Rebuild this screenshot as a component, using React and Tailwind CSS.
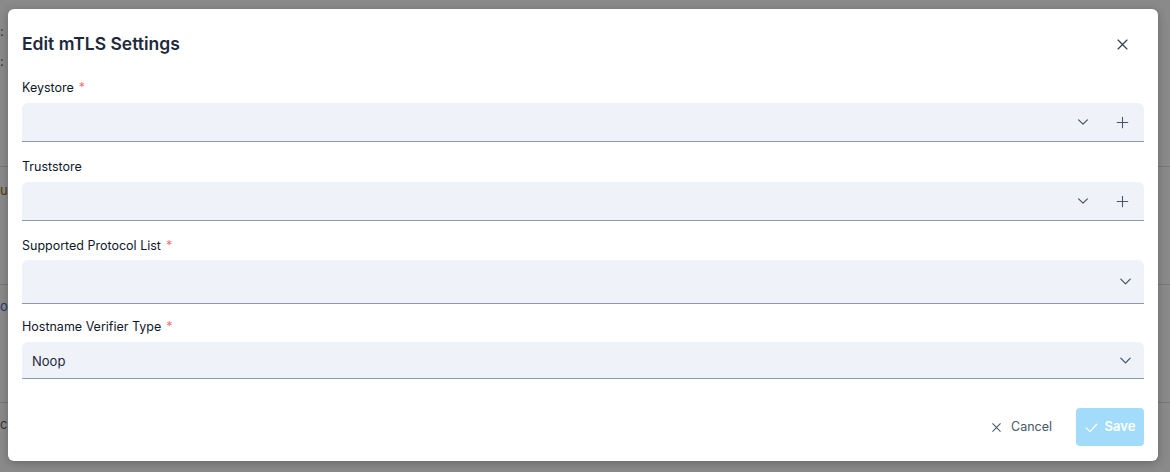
import React from "react";

const Chevron = ({ className = "" }) => (
  <svg viewBox="0 0 16 16" className={className} fill="none" stroke="currentColor" strokeWidth="1.4" strokeLinecap="round" strokeLinejoin="round">
    <path d="M3 5.5l5 5 5-5" />
  </svg>
);

const Plus = ({ className = "" }) => (
  <svg viewBox="0 0 16 16" className={className} fill="none" stroke="currentColor" strokeWidth="1.3" strokeLinecap="round">
    <path d="M8 1.5v13M1.5 8h13" />
  </svg>
);

const XIcon = ({ className = "" }) => (
  <svg viewBox="0 0 16 16" className={className} fill="none" stroke="currentColor" strokeWidth="1.5" strokeLinecap="round">
    <path d="M2.5 2.5l11 11M13.5 2.5l-11 11" />
  </svg>
);

const Check = ({ className = "" }) => (
  <svg viewBox="0 0 16 16" className={className} fill="none" stroke="currentColor" strokeWidth="1.5" strokeLinecap="round" strokeLinejoin="round">
    <path d="M1.5 8.5l4.5 4.5 8.5-9" />
  </svg>
);

function Label({ children, required }) {
  return (
    <div className="text-[12.5px] leading-5 font-normal text-[#0f172a] pt-[2px]">
      {children}
      {required && <span className="ml-[5px] text-[#f87171]">*</span>}
    </div>
  );
}

function Field({ h, plus, value, chevronRight }) {
  return (
    <div
      className={`flex items-center rounded-t-[6px] bg-[#eff2f8] border-b border-[#8a99b4] ${h}`}
    >
      <div className="flex-1 pl-[10px] pt-[3px] text-[13px] text-[#1e293b]">{value}</div>
      {plus ? (
        <div className="flex items-center">
          <Chevron className="w-[14px] h-[14px] text-[#475569] mr-[26px]" />
          <Plus className="w-[13px] h-[13px] text-[#475569] mr-[15px]" />
        </div>
      ) : (
        <Chevron className={`w-[15px] h-[15px] text-[#475569] ${chevronRight}`} />
      )}
    </div>
  );
}

export default function App() {
  return (
    <div
      className="relative w-[1170px] h-[472px] overflow-hidden bg-[#8a8a8a]"
      style={{ fontFamily: "Inter, 'Noto Sans', sans-serif" }}
    >
      {/* underlying page hints */}
      <div className="absolute left-0 top-[22px] text-[13px] text-[#333]">:</div>
      <div className="absolute left-0 top-[52px] text-[13px] text-[#333]">:</div>
      <div className="absolute left-0 right-0 top-[166px] h-px bg-[#777]" />
      <div className="absolute left-0 top-[181px] text-[13px] text-[#4a3a10]">u</div>
      <div className="absolute left-0 right-0 top-[284px] h-px bg-[#777]" />
      <div className="absolute left-0 top-[297px] text-[13px] text-[#1e3a6a]">o</div>
      <div className="absolute left-0 right-0 top-[402px] h-px bg-[#777]" />
      <div className="absolute left-0 top-[415px] text-[13px] text-[#333]">c</div>

      {/* modal */}
      <div className="absolute left-[8px] top-[9px] w-[1150px] h-[452px] bg-white rounded-[6px] shadow-[0_2px_10px_rgba(0,0,0,0.25)] px-[14px] flex flex-col">
        <div className="flex items-center justify-between pt-[21px] h-[49px]">
          <div className="text-[17.5px] leading-7 font-semibold text-[#1e293b]">Edit mTLS Settings</div>
          <XIcon className="w-[13px] h-[13px] text-[#334155] mr-[15px]" />
        </div>

        <div className="mt-[18px]">
          <Label required>Keystore</Label>
          <div className="mt-[5px]">
            <Field h="h-[39px]" plus />
          </div>
        </div>

        <div className="mt-[13px]">
          <Label>Truststore</Label>
          <div className="mt-[5px]">
            <Field h="h-[39px]" plus />
          </div>
        </div>

        <div className="mt-[13px]">
          <Label required>Supported Protocol List</Label>
          <div className="mt-[4px]">
            <Field h="h-[44px]" chevronRight="mr-[11px]" />
          </div>
        </div>

        <div className="mt-[11px]">
          <Label required>Hostname Verifier Type</Label>
          <div className="mt-[5px]">
            <Field h="h-[37px]" value="Noop" chevronRight="mr-[11px]" />
          </div>
        </div>

        <div className="flex justify-end items-center mt-[29px] gap-[24px]">
          <div className="flex items-center gap-[9px] text-[12.5px] font-normal text-[#475569]">
            <XIcon className="w-[11px] h-[11px]" />
            <span>Cancel</span>
          </div>
          <div className="flex items-center justify-center gap-[7px] w-[68px] h-[38px] rounded-[4px] bg-[#a3dcfa] text-white text-[13px] font-semibold">
            <Check className="w-[13px] h-[13px]" />
            <span>Save</span>
          </div>
        </div>
      </div>
    </div>
  );
}
